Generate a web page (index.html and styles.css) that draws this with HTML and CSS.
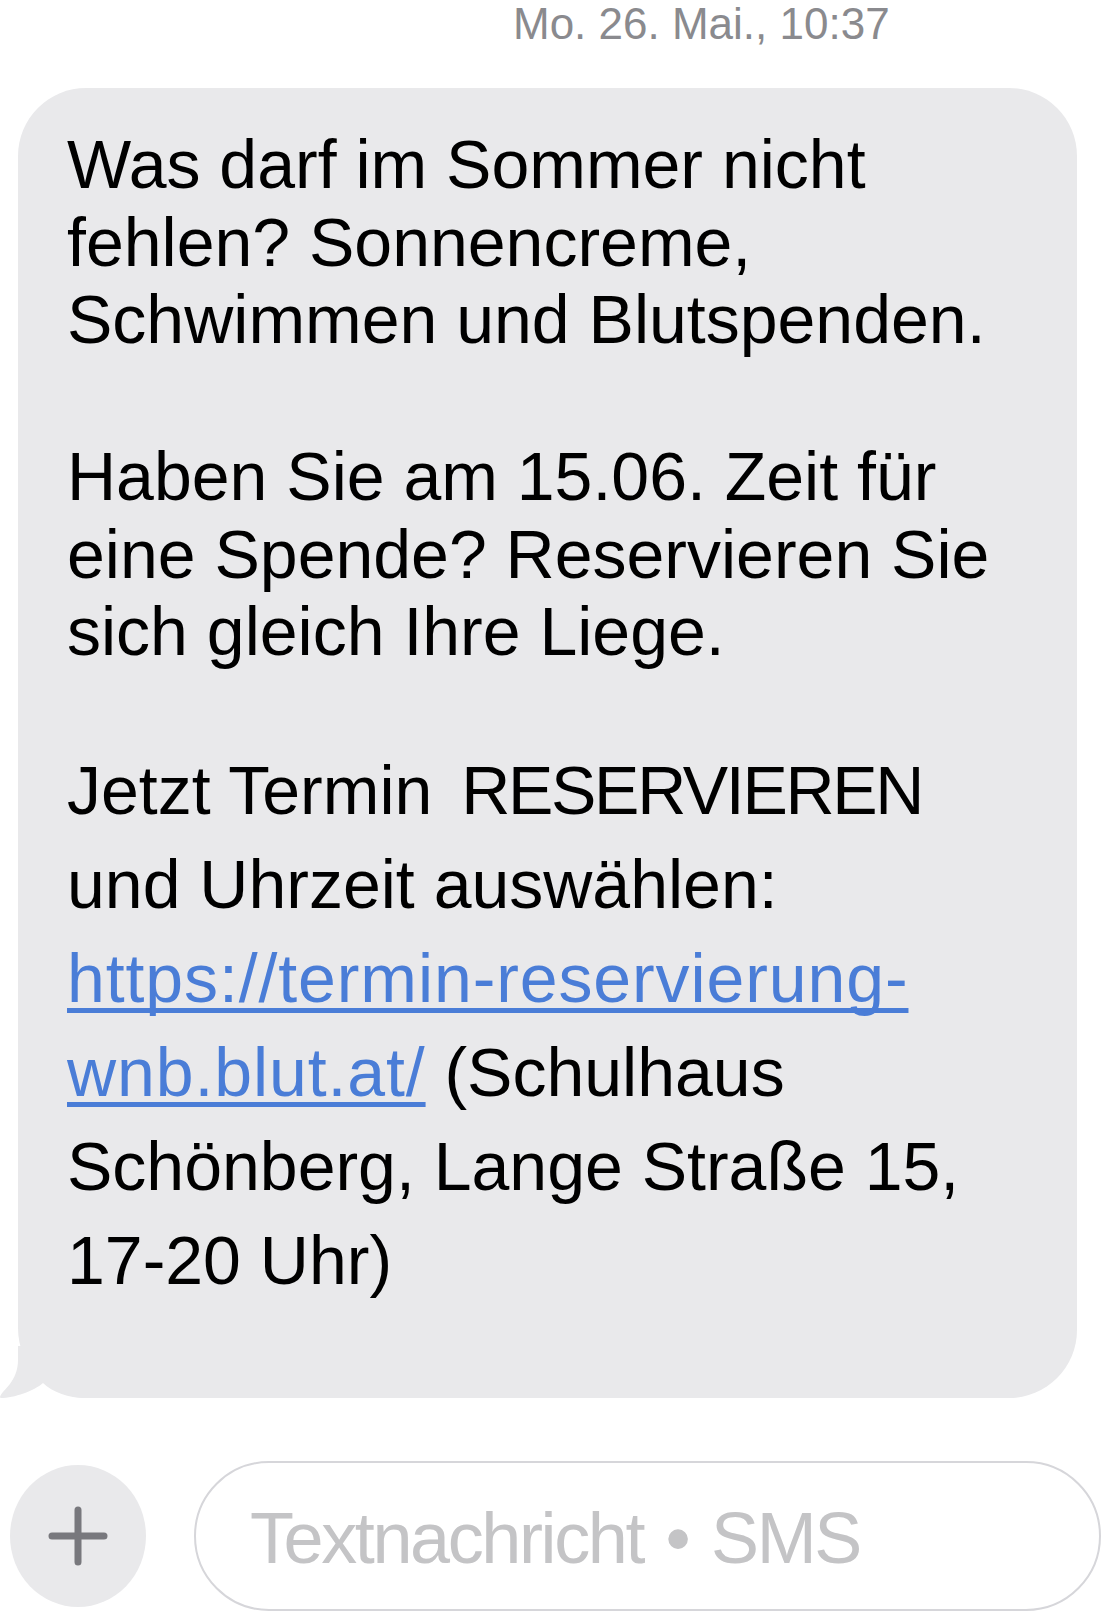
FILE: index.html
```html
<!DOCTYPE html>
<html lang="de">
<head>
<meta charset="utf-8">
<title>SMS</title>
<link rel="stylesheet" href="styles.css">
</head>
<body>
<div class="screen">
  <div class="timestamp">Mo. 26. Mai., 10:37</div>

  <div class="bubble">
    <p class="para">Was darf im Sommer nicht<br>fehlen? Sonnencreme,<br>Schwimmen und Blutspenden.</p>
    <p class="para para-second">Haben Sie am 15.06. Zeit für<br>eine Spende? Reservieren Sie<br>sich gleich Ihre Liege.</p>
    <p class="para para-third">Jetzt Termin <span class="caps">RESERVIEREN</span><br>und Uhrzeit auswählen:<br><a class="link" href="#">https://termin-reservierung-<br>wnb.blut.at/</a> (Schulhaus<br>Schönberg, Lange Straße 15,<br>17-20 Uhr)</p>
    <svg class="tail" width="90" height="52" viewBox="0 0 90 52" aria-hidden="true">
      <path d="M18,0 L90,0 L90,52 L84,52 C70,52 52,46 43,37 C34,45 14,52 1,52 C0,52 0,51 0,51 C2,44 18,36 18,14 Z" fill="#e9e9eb"/>
    </svg>
  </div>

  <div class="composer">
    <div class="plus-btn">
      <svg width="60" height="60" viewBox="0 0 60 60" aria-hidden="true">
        <path d="M4,30 H56 M30,4 V56" stroke="#78787d" stroke-width="7" stroke-linecap="round" fill="none"/>
      </svg>
    </div>
    <div class="input-pill">
      <span class="placeholder">Textnachricht • SMS</span>
    </div>
  </div>
</div>
</body>
</html>
```

FILE: styles.css
```css
html, body {
  margin: 0;
  padding: 0;
  background: #ffffff;
}

body {
  font-family: "Liberation Sans", Arial, Helvetica, sans-serif;
  color: #000;
}

.screen {
  width: 1106px;
  height: 1614px;
  overflow: hidden;
}

.timestamp {
  padding-left: 513px;
  font-size: 44px;
  line-height: 48px;
  color: #8a8a8e;
  white-space: nowrap;
}

.bubble {
  position: relative;
  margin: 40px 0 0 18px;
  width: 1059px;
  box-sizing: border-box;
  background: #e9e9eb;
  border-radius: 68px;
  border-bottom-left-radius: 70px;
  padding: 38px 20px 91px 49px;
}

.para {
  margin: 0;
  font-size: 68px;
  line-height: 77.5px;
  white-space: nowrap;
}

.para-second {
  margin-top: 79.5px;
}

.para-third {
  margin-top: 72px;
  line-height: 94px;
}

.caps {
  margin-left: 10px;
  letter-spacing: -2.3px;
}

.link {
  color: #4a7dd7;
  letter-spacing: 0.9px;
  text-decoration: underline;
  text-decoration-thickness: 5px;
  text-underline-offset: 6px;
  text-decoration-skip-ink: none;
}

.tail {
  position: absolute;
  left: -18px;
  bottom: 0;
  display: block;
}

.composer {
  display: flex;
  align-items: center;
  gap: 48px;
  margin-top: 63px;
  padding-left: 10px;
}

.plus-btn {
  flex: none;
  width: 136px;
  height: 142px;
  border-radius: 50%;
  background: #e9e9eb;
  display: flex;
  align-items: center;
  justify-content: center;
}

.plus-btn svg {
  display: block;
}

.input-pill {
  flex: none;
  width: 907px;
  height: 150px;
  box-sizing: border-box;
  border: 2px solid #d6d6da;
  border-radius: 75px;
  padding: 4px 0 0 54px;
}

.placeholder {
  display: block;
  font-size: 72px;
  line-height: 142px;
  letter-spacing: -2.4px;
  word-spacing: 5px;
  color: #c4c4c6;
  white-space: nowrap;
}
```
